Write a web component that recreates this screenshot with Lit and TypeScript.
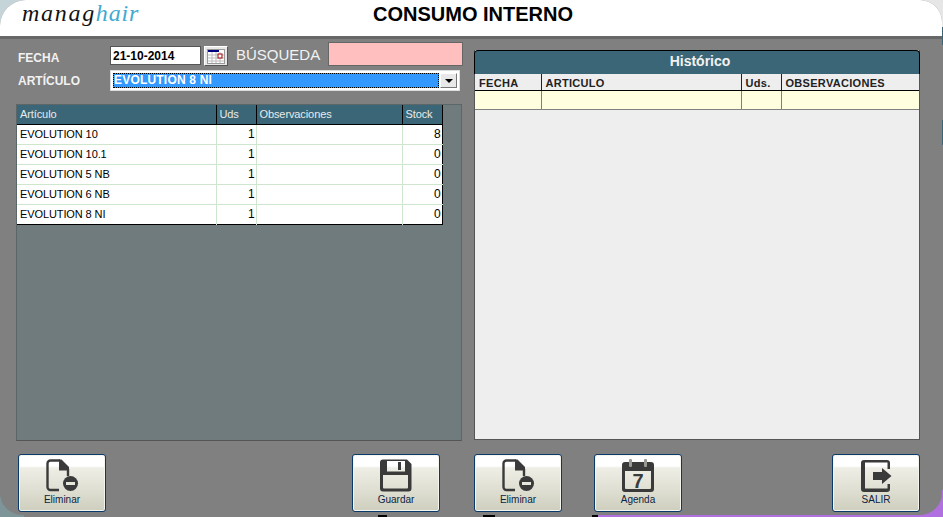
import { LitElement, html, css, svg } from "lit";
import { customElement } from "lit/decorators.js";

const rows = [
  ["EVOLUTION 10", "1", "", "8"],
  ["EVOLUTION 10.1", "1", "", "0"],
  ["EVOLUTION 5 NB", "1", "", "0"],
  ["EVOLUTION 6 NB", "1", "", "0"],
  ["EVOLUTION 8 NI", "1", "", "0"],
];

const docIcon = svg`<svg width="34" height="33" viewBox="0 0 34 33">
  <path d="M14 31H5.500a3 3 0 0 1-3-3V4.500a3 3 0 0 1 3-3H15M23 10v7" fill="none" stroke="#3a3a3a" stroke-width="2.400"/>
  <path d="M14 .5h2.500L24 8v3.500H14z" fill="#3a3a3a"/>
  <circle cx="25.500" cy="24.500" r="7.500" fill="#3a3a3a"/><rect x="21" y="23" width="9" height="3" fill="#e6e6dc"/>
</svg>`;
const saveIcon = svg`<svg width="34" height="33" viewBox="0 0 34 33">
  <path fill-rule="evenodd" fill="#3a3a3a" d="M4 .5h24l4.500 4.500v24.500a3 3 0 0 1-3 3H4a3 3 0 0 1-3-3V3.500a3 3 0 0 1 3-3zM8 2v10.500h18V2zM4 16v12.500a1 1 0 0 0 1 1h23a1 1 0 0 0 1-1V16z"/>
  <rect x="19" y="3" width="3" height="8" fill="#3a3a3a"/>
</svg>`;
const calIcon = svg`<svg width="34" height="33" viewBox="0 0 34 33">
  <path fill-rule="evenodd" fill="#3a3a3a" d="M4 3h26a3 3 0 0 1 3 3v24a3 3 0 0 1-3 3H4a3 3 0 0 1-3-3V6a3 3 0 0 1 3-3zM4 12v17a1 1 0 0 0 1 1h24a1 1 0 0 0 1-1V12z"/>
  <rect x="8" y="0" width="3" height="8" rx="1" fill="#9a9a94"/><rect x="23" y="0" width="3" height="8" rx="1" fill="#9a9a94"/>
  <text x="17" y="28.500" text-anchor="middle" font-family="Liberation Sans, sans-serif" font-weight="bold" font-size="20" fill="#3a3a3a">7</text>
</svg>`;
const exitIcon = svg`<svg width="34" height="33" viewBox="0 0 34 33">
  <path fill="#3a3a3a" d="M5 1h23a3 3 0 0 1 3 3v6h-2.500V3.500H6V29.500h22.500V25H31v5a3 3 0 0 1-3 3H5a3 3 0 0 1-3-3V4a3 3 0 0 1 3-3z"/>
  <path fill="#3a3a3a" d="M14 13h9V9l9.500 8-9.500 8v-4h-9z"/>
</svg>`;

@customElement("app-root")
export class AppRoot extends LitElement {
  static styles = css`
    :host {
      display: block; width: 943px; height: 517px; overflow: hidden;
      background:
        linear-gradient(#c4d4d8, #c4d4d8) 0 0 / 30px 30px no-repeat,
        linear-gradient(#e6e6e6, #e6e6e6) 100% 0 / 30px 27px no-repeat,
        linear-gradient(#808080 0 27px, #3a6677 27px 45px, #808080 45px 120px, #3a6677 120px 145px, #808080 145px) 100% 0 / 1px 490px no-repeat,
        linear-gradient(90deg, #7d9498 0 24px, #808080 24px 378px, #000 378px 387px, #808080 387px 483px, #000 483px 495px, #808080 495px 592px, #000 592px 598px, #b070e0 598px);
      font-family: "Liberation Sans", Arial, sans-serif;
    }
    .shell { width: 942px; height: 515px; background: #808080; border-radius: 26px 22px 22px 22px; overflow: hidden; display: flex; flex-direction: column; box-sizing: border-box; padding-bottom: 3px; }
    .top { height: 36px; background: #fff; display: grid; grid-template-columns: 1fr auto 1fr; align-items: center; flex: none; border-bottom: 3px solid; border-image: linear-gradient(#c8c8c8, #666) 1; }
    .logo { padding-left: 22px; font: italic 24px/1 "Liberation Serif", serif; color: #111; letter-spacing: 1.7px; position: relative; top: -5px; }
    .logo b { font-weight: normal; color: #3fa9d0; letter-spacing: .8px; }
    .title { font-size: 20px; font-weight: bold; color: #000; position: relative; top: -4px; left: 2px; }
    .body { flex: 1; display: grid; grid-template-columns: 446px 446px; column-gap: 12px; padding: 3px 22px 0 16px; min-height: 0; }
    .left { display: flex; flex-direction: column; }
    .form { height: 62px; display: grid; grid-template-columns: 94px 91px 27px 100px 135px; grid-template-rows: 28px 22px; align-content: start; font-weight: bold; color: #f2f2f2; font-size: 12px; }
    .lab { padding-left: 2px; align-self: end; padding-bottom: 5px; }
    .lab2 { align-self: center; padding-bottom: 0; }
    .date { margin-top: 4px; height: 19px; box-sizing: border-box; background: #fff; border: 1px solid #555; color: #000; padding: 2px 2px; line-height: 14px; white-space: nowrap; }
    .calbtn { margin: 4px 0 0 3px; width: 24px; height: 20px; background: #e8e8e8; border: 1px solid; border-color: #fff #555 #555 #fff; box-sizing: border-box; display: flex; align-items: center; justify-content: center; }
    .bus { font-weight: normal; font-size: 15px; padding: 0 0 3px 8px; align-self: center; white-space: nowrap; }
    .pink { background: #ffbfbf; border: 1px solid #666; box-sizing: border-box; height: 24px; }
    .combo { grid-column: 2 / 6; margin-right: 3px; height: 21px; background: #fff; box-sizing: border-box; border: 1px solid #ddd; display: flex; padding: 2px; gap: 1px; }
    .sel { flex: 1; background: #3399ff; color: #fff; padding: 0 1px; line-height: 15px; outline: 1px dotted #000; outline-offset: -1px; letter-spacing: .2px; }
    .arrow { width: 17px; background: #e8e8e8; border: 1px solid; border-color: #fff #777 #777 #fff; box-sizing: border-box; display: flex; align-items: center; justify-content: center; }
    .arrow i { border: 4px solid transparent; border-top-color: #000; border-bottom: 0; }
    .panel { height: 337px; box-sizing: border-box; background: #6f7b7d; border: 1px solid #5b6668; border-bottom-color: #555; }
    table { border-collapse: collapse; table-layout: fixed; }
    .grid { width: 425px; background: #fff; border-bottom: 1px solid #000; border-right: 1px solid #000; font-size: 11px; color: #000; letter-spacing: -.1px; }
    .grid th { background: #3a6677; color: #eaeaea; font-weight: normal; text-align: left; height: 19px; padding: 0 3px; border-right: 1px solid #000; border-bottom: 1px solid #000; box-sizing: border-box; }
    .grid th:last-child { border-right: 0; }
    .grid td { height: 20px; padding: 0 3px; box-sizing: border-box; border-right: 1px solid #cde6cd; border-bottom: 1px solid #cde6cd; white-space: nowrap; }
    .grid td:last-child { border-right: 0; }
    .grid tr:last-child td { border-bottom: 0; }
    .num { text-align: right; padding-right: 1px !important; font-size: 12px; }
    .hist { height: 390px; margin-top: 8px; box-sizing: border-box; background: #eeeeee; border: 1px solid #555; border-top: 0; }
    .hist h2 { height: 24px; background: #3a6677; color: #f2f2f2; font-size: 14px; line-height: 21px; text-align: center; font-weight: bold; border-radius: 4px 4px 0 0; border: 1px solid #000; border-bottom: 0; box-sizing: border-box; margin: 0 -1px; padding-left: 6px; }
    .hgrid { width: 444px; font-size: 11px; font-weight: bold; color: #222; }
    .hgrid th { height: 16px; padding: 3px 3px 0 4px; text-align: left; box-sizing: border-box; border-right: 1px solid #222; border-bottom: 1px solid #000; letter-spacing: .3px; line-height: 12px; }
    .hgrid td { height: 19px; background: #ffffe0; box-sizing: border-box; border-right: 1px solid #808080; border-bottom: 1px solid #808080; }
    .hgrid th:last-child, .hgrid td:last-child { border-right: 0; }
    .bar { height: 58px; margin-top: 13px; flex: none; display: flex; padding: 0 0 0 18px; }
    .btn { flex: none; width: 88px; height: 58px; box-sizing: border-box; border: 1px solid #0a3a6a; border-radius: 3px; background: linear-gradient(#fff 0 11px, #eeeee6 13px, #cfcfbf 100%); box-shadow: inset 0 0 0 1px #f5f5f0; display: flex; flex-direction: column; align-items: center; font-size: 10px; color: #0c2340; padding-top: 4px; }
    .btn svg { flex: none; }
    .btn span { line-height: 14px; margin-top: 1px; }
    .g1 { margin-left: 246px; } .g2 { margin-left: 34px; } .g3 { margin-left: 32px; } .g4 { margin-left: 150px; }
  `;

  render() {
    return html`<div class="shell">
      <div class="top">
        <div class="logo">manag<b>hair</b></div>
        <div class="title">CONSUMO INTERNO</div>
        <div></div>
      </div>
      <div class="body">
        <div class="left">
          <div class="form">
            <div class="lab">FECHA</div>
            <div class="date">21-10-2014</div>
            <div class="calbtn">
              <svg width="18" height="15" viewBox="0 0 18 15"><rect x=".5" y=".5" width="17" height="14" fill="#fff" stroke="#999"/><rect x="1" y="1" width="11" height="2" fill="#000080"/><path d="M1 6h16M1 9h16M1 12h16M5 3v11M9 3v11M13 3v11" stroke="#bbb"/><rect x="11" y="5" width="4" height="4" fill="#fff" stroke="#a00000"/></svg>
            </div>
            <div class="bus">BÚSQUEDA</div>
            <div class="pink"></div>
            <div class="lab lab2">ARTÍCULO</div>
            <div class="combo"><div class="sel">EVOLUTION 8 NI</div><div class="arrow"><i></i></div></div>
          </div>
          <div class="panel">
            <table class="grid">
              <colgroup><col style="width:199px"><col style="width:40px"><col style="width:146px"><col style="width:40px"></colgroup>
              <thead><tr><th>Artículo</th><th>Uds</th><th>Observaciones</th><th>Stock</th></tr></thead>
              <tbody>${rows.map(r => html`<tr><td>${r[0]}</td><td class="num">${r[1]}</td><td>${r[2]}</td><td class="num">${r[3]}</td></tr>`)}</tbody>
            </table>
          </div>
        </div>
        <div class="hist">
          <h2>Histórico</h2>
          <table class="hgrid">
            <colgroup><col style="width:66px"><col style="width:200px"><col style="width:40px"><col></colgroup>
            <thead><tr><th>FECHA</th><th>ARTICULO</th><th>Uds.</th><th>OBSERVACIONES</th></tr></thead>
            <tbody><tr><td></td><td></td><td></td><td></td></tr></tbody>
          </table>
        </div>
      </div>
      <div class="bar">
        <div class="btn">${docIcon}<span>Eliminar</span></div>
        <div class="btn g1">${saveIcon}<span>Guardar</span></div>
        <div class="btn g2">${docIcon}<span>Eliminar</span></div>
        <div class="btn g3">${calIcon}<span>Agenda</span></div>
        <div class="btn g4">${exitIcon}<span>SALIR</span></div>
      </div>
    </div>`;
  }
}
